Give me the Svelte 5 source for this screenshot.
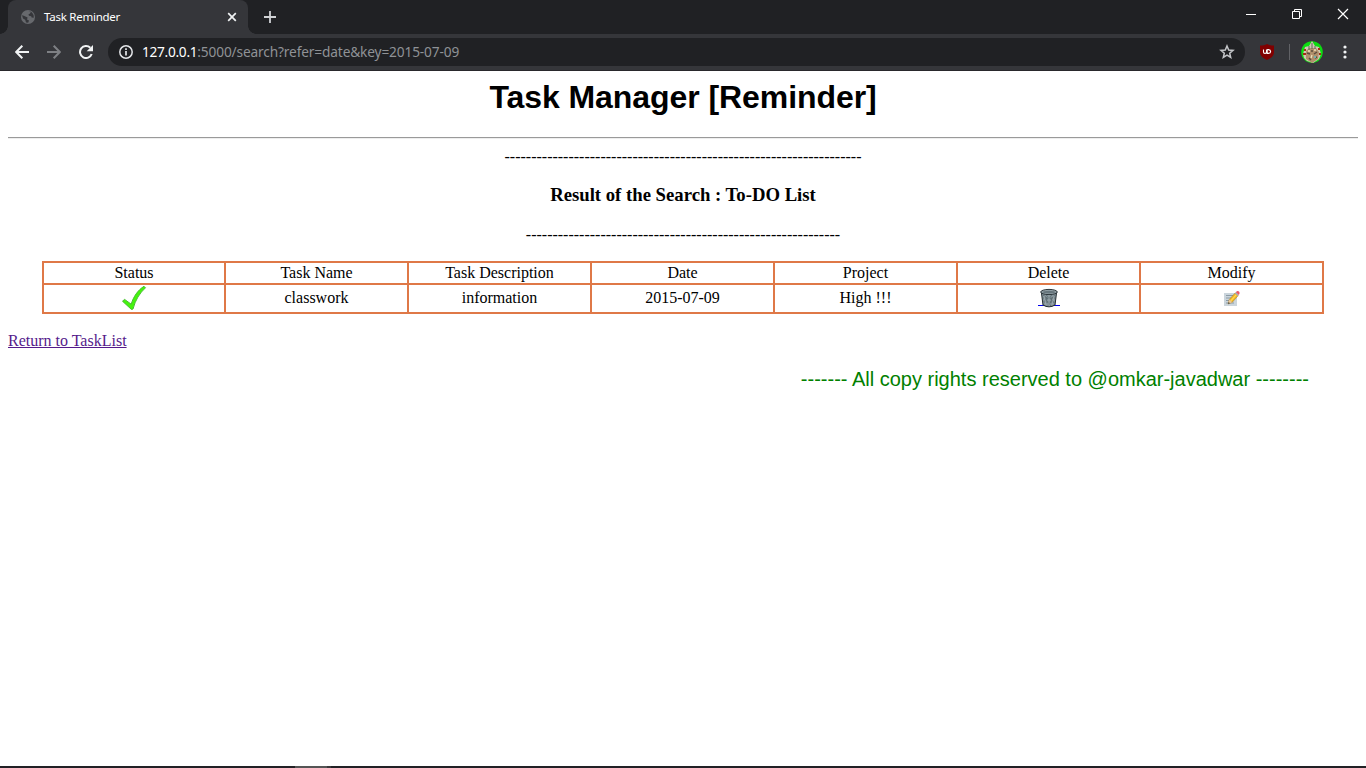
<script>
  const headings = ['Status', 'Task Name', 'Task Description', 'Date', 'Project', 'Delete', 'Modify'];
  const dashes = (n) => '-'.repeat(n);
</script>

<div class="window">
  <header>
    <div class="tabs">
      <div class="tab">
        <svg class="globe" width="14" height="14" viewBox="0 0 14 14">
          <circle cx="7" cy="7" r="7" fill="#67696d" />
          <path d="M1 5.2Q3 5.6 4.4 6.4L6.6 7.6 6 9.4 8 10.4 7.2 12.8 5 12.4 4.2 9.8 2 8.6Z" fill="#35363a" />
          <path d="M7.5 1.2 9.8 2 9 3.6 7.4 4.4 8 5.8 10.2 6.2 10.6 7.6 12.8 7.8 12.6 5 11 2.6 9.4 1.4Z" fill="#35363a" />
        </svg>
        <span class="tab-title">Task Reminder</span>
        <svg class="tab-close" width="10" height="10" viewBox="0 0 10 10"><path d="M1.2 1.2 8.8 8.8M8.8 1.2 1.2 8.8" stroke="#f1f3f4" stroke-width="1.7" /></svg>
      </div>
      <svg class="plus" width="12" height="12" viewBox="0 0 12 12"><path d="M6 0V12M0 6H12" stroke="#d0d2d5" stroke-width="1.8" /></svg>
      <div class="controls">
        <svg width="10" height="12" viewBox="0 0 10 12"><path d="M0 6.5H10" stroke="#fff" /></svg>
        <svg width="12" height="12" viewBox="0 0 12 12"><path d="M1.5 3.5H8.5V10.5H1.5ZM3.5 3.5V1.5H10.5V8.5H8.5" fill="none" stroke="#fff" /></svg>
        <svg width="12" height="12" viewBox="0 0 12 12"><path d="M1 1 11 11M11 1 1 11" stroke="#fff" stroke-width="1.2" /></svg>
      </div>
    </div>
    <div class="toolbar">
      <svg class="back" width="14" height="14" viewBox="0 0 14 14"><path d="M14 7H1.5M7.3 .8 1.2 7 7.3 13.2" fill="none" stroke="#f1f3f4" stroke-width="2" /></svg>
      <svg class="forward" width="14" height="14" viewBox="0 0 14 14"><path d="M0 7H12.5M6.7 .8 12.8 7 6.7 13.2" fill="none" stroke="#7e8084" stroke-width="2" /></svg>
      <svg class="reload" width="14" height="14" viewBox="0 0 14 14"><path d="M12.7 9A6 6 0 1 1 11.3 2.8" fill="none" stroke="#f1f3f4" stroke-width="2" /><path d="M14 0V6.3H7.7Z" fill="#f1f3f4" /></svg>
      <div class="address">
        <svg width="14" height="14" viewBox="0 0 14 14"><circle cx="7" cy="7" r="6.2" fill="none" stroke="#e4e6e9" stroke-width="1.5" /><path d="M7 6V10.5M7 3.3V5" stroke="#e4e6e9" stroke-width="1.7" /></svg>
        <span class="url"><b>127.0.0.1</b>:5000/search?refer=date&amp;key=2015-07-09</span>
        <svg class="star" width="16" height="16" viewBox="0 0 16 16"><path d="M8 2 9.7 6.1 14 6.4 10.7 9.2 11.7 13.5 8 11.2 4.3 13.5 5.3 9.2 2 6.4 6.3 6.1Z" fill="none" stroke="#c4c6c9" stroke-width="1.5" /></svg>
      </div>
      <svg class="shield" width="14" height="16" viewBox="0 0 14 16">
        <path d="M7 0C9 1.2 11.2 1.6 14 1.6V8C14 12 11 14.3 7 16 3 14.3 0 12 0 8V1.6C2.8 1.6 5 1.2 7 0Z" fill="#800000" />
        <path d="M3.5 5.5V8Q3.5 9.4 5 9.4T6.5 8V5.5M7.2 5.5V9.4H8.5Q10.6 9.3 10.6 7.5T8.5 5.6H7.2" fill="none" stroke="#fff" stroke-width="1.1" />
      </svg>
      <span class="divider"></span>
      <svg class="avatar" width="22" height="22" viewBox="0 0 22 22">
        <circle cx="11" cy="11" r="10.8" fill="#0bdc10" />
        <path d="M2 13 4 6 8 5 11 0 14 5 18 6 20 13 18 18 12 22 6 20 3 17Z" fill="#d0c7b2" />
        <path d="M5 10 8 7H15L18 11 17 18 11 22 5 18Z" fill="#b0906b" />
        <path d="M11 2V8M8 5V9M14 5V9" stroke="#60665b" />
        <path d="M3 9H5M17 8H19M2 13H5M18 13H20" stroke="#a32d18" stroke-width="2" />
        <path d="M6 12 9 13M13 13 16 11M8 17 10 19M14 17 16 16M10 10H12" stroke="#594c3e" stroke-width="1.5" />
        <path d="M7 10H9M11 14 10 17M13 9H15" stroke="#eee0bd" stroke-width="1.3" />
        <path d="M13 16H15" stroke="#74b4ae" stroke-width="2" />
      </svg>
      <svg class="menu" width="4" height="14" viewBox="0 0 4 14" fill="#f1f3f4"><circle cx="2" cy="2" r="1.6" /><circle cx="2" cy="7" r="1.6" /><circle cx="2" cy="12" r="1.6" /></svg>
    </div>
  </header>

  <main>
    <h1>Task Manager [Reminder]</h1>
    <hr />
    <p class="rule">{dashes(67)}</p>
    <h3>Result of the Search : To-DO List</h3>
    <p class="rule">{dashes(59)}</p>
    <table>
      <colgroup><col class="first" /><col span="6" class="other" /></colgroup>
      <tbody>
        <tr class="head">{#each headings as heading}<td>{heading}</td>{/each}</tr>
        <tr class="task">
          <td>
            <svg class="check" width="26" height="26" viewBox="0 0 26 26"><path d="M1.5 16.2 3.6 14.4 10.2 19.2C12.3 11.8 17 5 23 1.3L24.5 2.8C18.6 8 14.2 15.4 12 24L10.5 24.5Z" fill="#44f50c" stroke="#48bd31" stroke-width="1" /></svg>
          </td>
          <td>classwork</td>
          <td>information</td>
          <td>2015-07-09</td>
          <td>High !!!</td>
          <td>
            <svg class="trash" width="22" height="20" viewBox="0 0 22 20">
              <rect y="17" width="22" height="1" fill="#0000ee" />
              <path d="M3.4 4.4 5 17Q11 20.7 17 17L18.6 4.4Z" fill="#84939a" stroke="#222b30" />
              <path d="M5 7 9 10 5.5 14M8 7 14 12 10 18M14 7 8 12 13 18M17.4 7 13 11 16.5 15M5 10H17M6 14H16" fill="none" stroke="#5a6970" stroke-width=".8" />
              <path d="M6 8 8 17M11 7V18M16 8 14 17" stroke="#a4b0b4" stroke-width=".8" />
              <ellipse cx="11" cy="4" rx="8.3" ry="2.6" fill="#93a1a7" stroke="#2d373c" />
              <ellipse cx="11" cy="4.1" rx="6.6" ry="1.3" fill="#66757c" />
            </svg>
          </td>
          <td>
            <svg class="note" width="18" height="17" viewBox="0 0 18 17">
              <path d="M1 3H14V16H1Z" fill="#cbd5dc" />
              <path d="M3 5.5H11M3 8H10M3 10.5H7M3 13H11" stroke="#8b9ba6" />
              <path d="M5 14 6.3 9.5 12.2 2.9 15.2 5.6 9.3 12.2Z" fill="#f2b622" stroke="#a98534" stroke-width=".6" />
              <path d="M7.8 10.8 13.6 4.4" stroke="#ffda55" stroke-width="1.2" />
              <path d="M6.3 9.5 9.3 12.2 5 14Z" fill="#e8c69e" /><path d="M5.6 12 7 13.2 5 14Z" fill="#333e45" />
              <path d="M12.8 2.3 13.8 1.3Q15 .5 16 1.5 17 2.6 16.4 3.9L15.6 5Z" fill="#ec5968" />
              <path d="M12.2 2.9 15.2 5.6" stroke="#9aafb9" stroke-width="1.2" />
            </svg>
          </td>
        </tr>
      </tbody>
    </table>
    <a href="#tasks">Return to TaskList</a>
    <footer>------- All copy rights reserved to @omkar-javadwar --------</footer>
  </main>
  <div class="taskbar"><span></span></div>
</div>

<style>
  :global(body) { margin: 0; overflow: hidden; background: #fff; }
  .window { width: 1366px; height: 768px; display: flex; flex-direction: column; overflow: hidden; }
  svg { display: block; flex: none; }
  header { height: 71px; flex: none; background: #35363a; border-bottom: 1px solid #29282c; box-sizing: border-box; }
  .tabs { height: 34px; background: #202124; display: flex; align-items: center; padding-left: 8px; }
  .tab { width: 240px; height: 34px; box-sizing: border-box; display: flex; align-items: center; background: #35363a; border-radius: 8px 8px 0 0; padding: 0 11px 0 13px; position: relative; }
  .tab::before, .tab::after { content: ""; position: absolute; bottom: 0; width: 8px; height: 8px; }
  .tab::before { left: -8px; background: radial-gradient(circle at 0 0, #202124 7.5px, #35363a 8px); }
  .tab::after { right: -8px; background: radial-gradient(circle at 100% 0, #202124 7.5px, #35363a 8px); }
  .tab-title { margin: -1px 0 0 9px; font-family: "Noto Sans", sans-serif; font-size: 11.5px; color: #fff; letter-spacing: -.25px; white-space: nowrap; }
  .tab-close { margin-left: auto; }
  .plus { margin-left: 16px; }
  .controls { display: flex; gap: 35px; margin-left: auto; padding: 0 17px 6px 0; }
  .controls svg:nth-child(-n+2) { margin: 0 -1px 0 1px; }
  .toolbar { height: 36px; display: flex; align-items: center; padding-left: 15px; }
  .forward { margin-left: 18px; }
  .reload { margin-left: 18px; }
  .address { width: 1137px; height: 28px; box-sizing: border-box; margin-left: 15px; border-radius: 14px; background: #202124; display: flex; align-items: center; padding: 0 10px 0 11px; }
  .url { margin: -1px 0 0 9px; font-family: "Noto Sans", sans-serif; font-size: 13.7px; letter-spacing: -.14px; color: #8f9296; white-space: nowrap; }
  .url b { color: #fff; font-weight: 400; letter-spacing: -.3px; }
  .star { margin-left: auto; }
  .shield { margin-left: 15px; }
  .divider { width: 1px; height: 16px; background: #616266; margin-left: 15px; }
  .avatar { margin-left: 11px; }
  .menu { margin-left: 20px; }
  main { flex: 1; padding: 0 8px; font-family: "Liberation Serif", serif; font-size: 16px; color: #000; }
  h1 { margin: 8px 0 21px; font: bold 32px/37px "Liberation Sans", sans-serif; letter-spacing: -.07px; text-align: center; }
  hr { height: 2px; margin: 0; border: 0; background: linear-gradient(#9a9a9a 1px, #eee 1px); }
  .rule { margin: 9px 0 0; line-height: 18px; text-align: center; }
  h3 { margin: 18px 0 0; font-size: 18.72px; line-height: 22px; text-align: center; }
  h3 + .rule { margin-top: 20px; }
  table { width: 1282px; margin: 17px auto 0; border-collapse: collapse; table-layout: fixed; }
  .first { width: 182px; }
  .other { width: 183px; }
  td { border: 2px solid #df7847; padding: 0; text-align: center; line-height: 18px; }
  .head td { height: 20px; }
  .task td { height: 26px; padding-bottom: 1px; }
  td svg { margin: 0 auto; }
  a { display: block; width: max-content; margin-top: 18px; line-height: 18px; color: #551a8b; }
  footer { margin: 18px 49px 0 0; text-align: right; font: 20px/23px "Liberation Sans", sans-serif; color: #008000; }
  .taskbar { height: 2px; background: #222125; flex: none; }
  .taskbar span { display: block; width: 32px; height: 2px; margin-left: 295px; background: #555; border-right: 4px solid #39383a; }
</style>
